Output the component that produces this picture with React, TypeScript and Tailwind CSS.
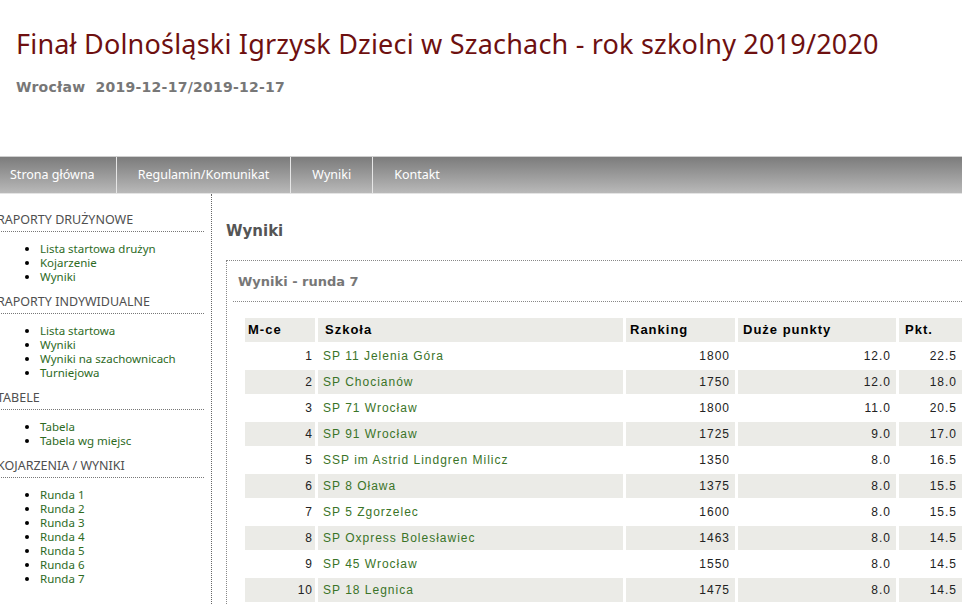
import React from 'react';

const sidebar = [
  { title: 'Raporty drużynowe', links: ['Lista startowa drużyn', 'Kojarzenie', 'Wyniki'] },
  { title: 'Raporty indywidualne', links: ['Lista startowa', 'Wyniki', 'Wyniki na szachownicach', 'Turniejowa'] },
  { title: 'Tabele', links: ['Tabela', 'Tabela wg miejsc'] },
  {
    title: 'Kojarzenia / wyniki',
    links: ['Runda 1', 'Runda 2', 'Runda 3', 'Runda 4', 'Runda 5', 'Runda 6', 'Runda 7'],
  },
];

const rows = [
  [1, 'SP 11 Jelenia Góra', 1800, '12.0', '22.5'],
  [2, 'SP Chocianów', 1750, '12.0', '18.0'],
  [3, 'SP 71 Wrocław', 1800, '11.0', '20.5'],
  [4, 'SP 91 Wrocław', 1725, '9.0', '17.0'],
  [5, 'SSP im Astrid Lindgren Milicz', 1350, '8.0', '16.5'],
  [6, 'SP 8 Oława', 1375, '8.0', '15.5'],
  [7, 'SP 5 Zgorzelec', 1600, '8.0', '15.5'],
  [8, 'SP Oxpress Bolesławiec', 1463, '8.0', '14.5'],
  [9, 'SP 45 Wrocław', 1550, '8.0', '14.5'],
  [10, 'SP 18 Legnica', 1475, '8.0', '14.5'],
];

const nav = ['Strona główna', 'Regulamin/Komunikat', 'Wyniki', 'Kontakt'];

const App = () => {
  return (
    <div className="w-[962px] h-[604px] overflow-hidden bg-white font-['Noto_Sans',sans-serif]">
      {/* header */}
      <div className="h-[156px] pl-4 pt-[26px]">
        <h1 className="text-[27px] leading-[36px] text-[#6e1010] tracking-[0.2px]">
          Finał Dolnośląski Igrzysk Dzieci w Szachach - rok szkolny 2019/2020
        </h1>
        <div className="mt-[15px] text-[14px] font-bold text-[#777] font-['DejaVu_Sans',sans-serif] tracking-[0.25px] whitespace-pre">
          Wrocław  2019-12-17/2019-12-17
        </div>
      </div>

      {/* nav */}
      <div className="h-[38px] border-t border-[#cfcfcf] border-b border-b-[#e4e4e4] bg-gradient-to-b from-[#7c7c7c] to-[#b9b9b9] flex -ml-[11px]">
        {nav.map((item, i) => (
          <div
            key={item}
            className={`px-[21px] flex items-center text-[12.5px] text-white ${i < nav.length - 1 ? 'border-r border-[#e6e6e6]' : ''}`}
          >
            {item}
          </div>
        ))}
      </div>

      <div className="flex">
        {/* sidebar */}
        <div className="w-[212px] shrink-0 border-r border-dotted border-[#666] h-[420px] pt-[18px] pr-[7px]">
          {sidebar.map((sec) => (
            <div key={sec.title} className="mb-[10px]">
              <div className="-ml-[3px] text-[12.5px] uppercase text-[#4f4f4f] leading-[16px] pb-[3px] border-b border-dotted border-[#777]">
                {sec.title}
              </div>
              <ul className="list-disc pl-[40px] mt-[10px] text-[11.5px] leading-[14px] text-[#2d6a1e]">
                {sec.links.map((l, i) => (
                  <li key={i} className="marker:text-black">
                    {l}
                  </li>
                ))}
              </ul>
            </div>
          ))}
        </div>

        {/* content */}
        <div className="flex-1 pl-[14px] pt-[22px] min-w-0">
          <h2 className="text-[15px] font-bold text-[#555] font-['DejaVu_Sans',sans-serif] leading-[30px]">
            Wyniki
          </h2>
          <div className="mt-[14px] border-l border-t border-dotted border-[#888] w-[760px] h-[400px] pl-[6px]">
            <div className="pl-[5px] pt-[12px] pb-[10px] text-[13px] font-bold text-[#777] font-['DejaVu_Sans',sans-serif] leading-[18px] border-b border-dotted border-[#888]">
              Wyniki - runda 7
            </div>
            <table className="ml-[9px] mt-[14px] border-separate border-spacing-x-[3px] border-spacing-y-[2px] font-['Liberation_Sans',Arial,sans-serif] text-[12px] tracking-[1px]">
              <thead>
                <tr className="bg-[#ebebe7] text-black h-[24px] text-[13px]">
                  <th className="w-[70px] text-left pl-[3px] font-bold">M-ce</th>
                  <th className="w-[305px] text-left pl-[7px] font-bold">Szkoła</th>
                  <th className="w-[109px] text-left pl-[4px] font-bold">Ranking</th>
                  <th className="w-[158px] text-left pl-[5px] font-bold">Duże punkty</th>
                  <th className="w-[63px] text-left pl-[6px] font-bold">Pkt.</th>
                </tr>
              </thead>
              <tbody>
                {rows.map((r, i) => (
                  <tr key={i} className={`h-[24px] ${i % 2 === 1 ? 'bg-[#ebebe7]' : 'bg-white'}`}>
                    <td className="text-right pr-[2px] text-[#222]">{r[0]}</td>
                    <td className="pl-[5px] text-[#3a7428]">{r[1]}</td>
                    <td className="text-right pr-[5px] text-[#222]">{r[2]}</td>
                    <td className="text-right pr-[5px] text-[#222]">{r[3]}</td>
                    <td className="text-right pr-[5px] text-[#222]">{r[4]}</td>
                  </tr>
                ))}
              </tbody>
            </table>
          </div>
        </div>
      </div>
    </div>
  );
};

export default App;
